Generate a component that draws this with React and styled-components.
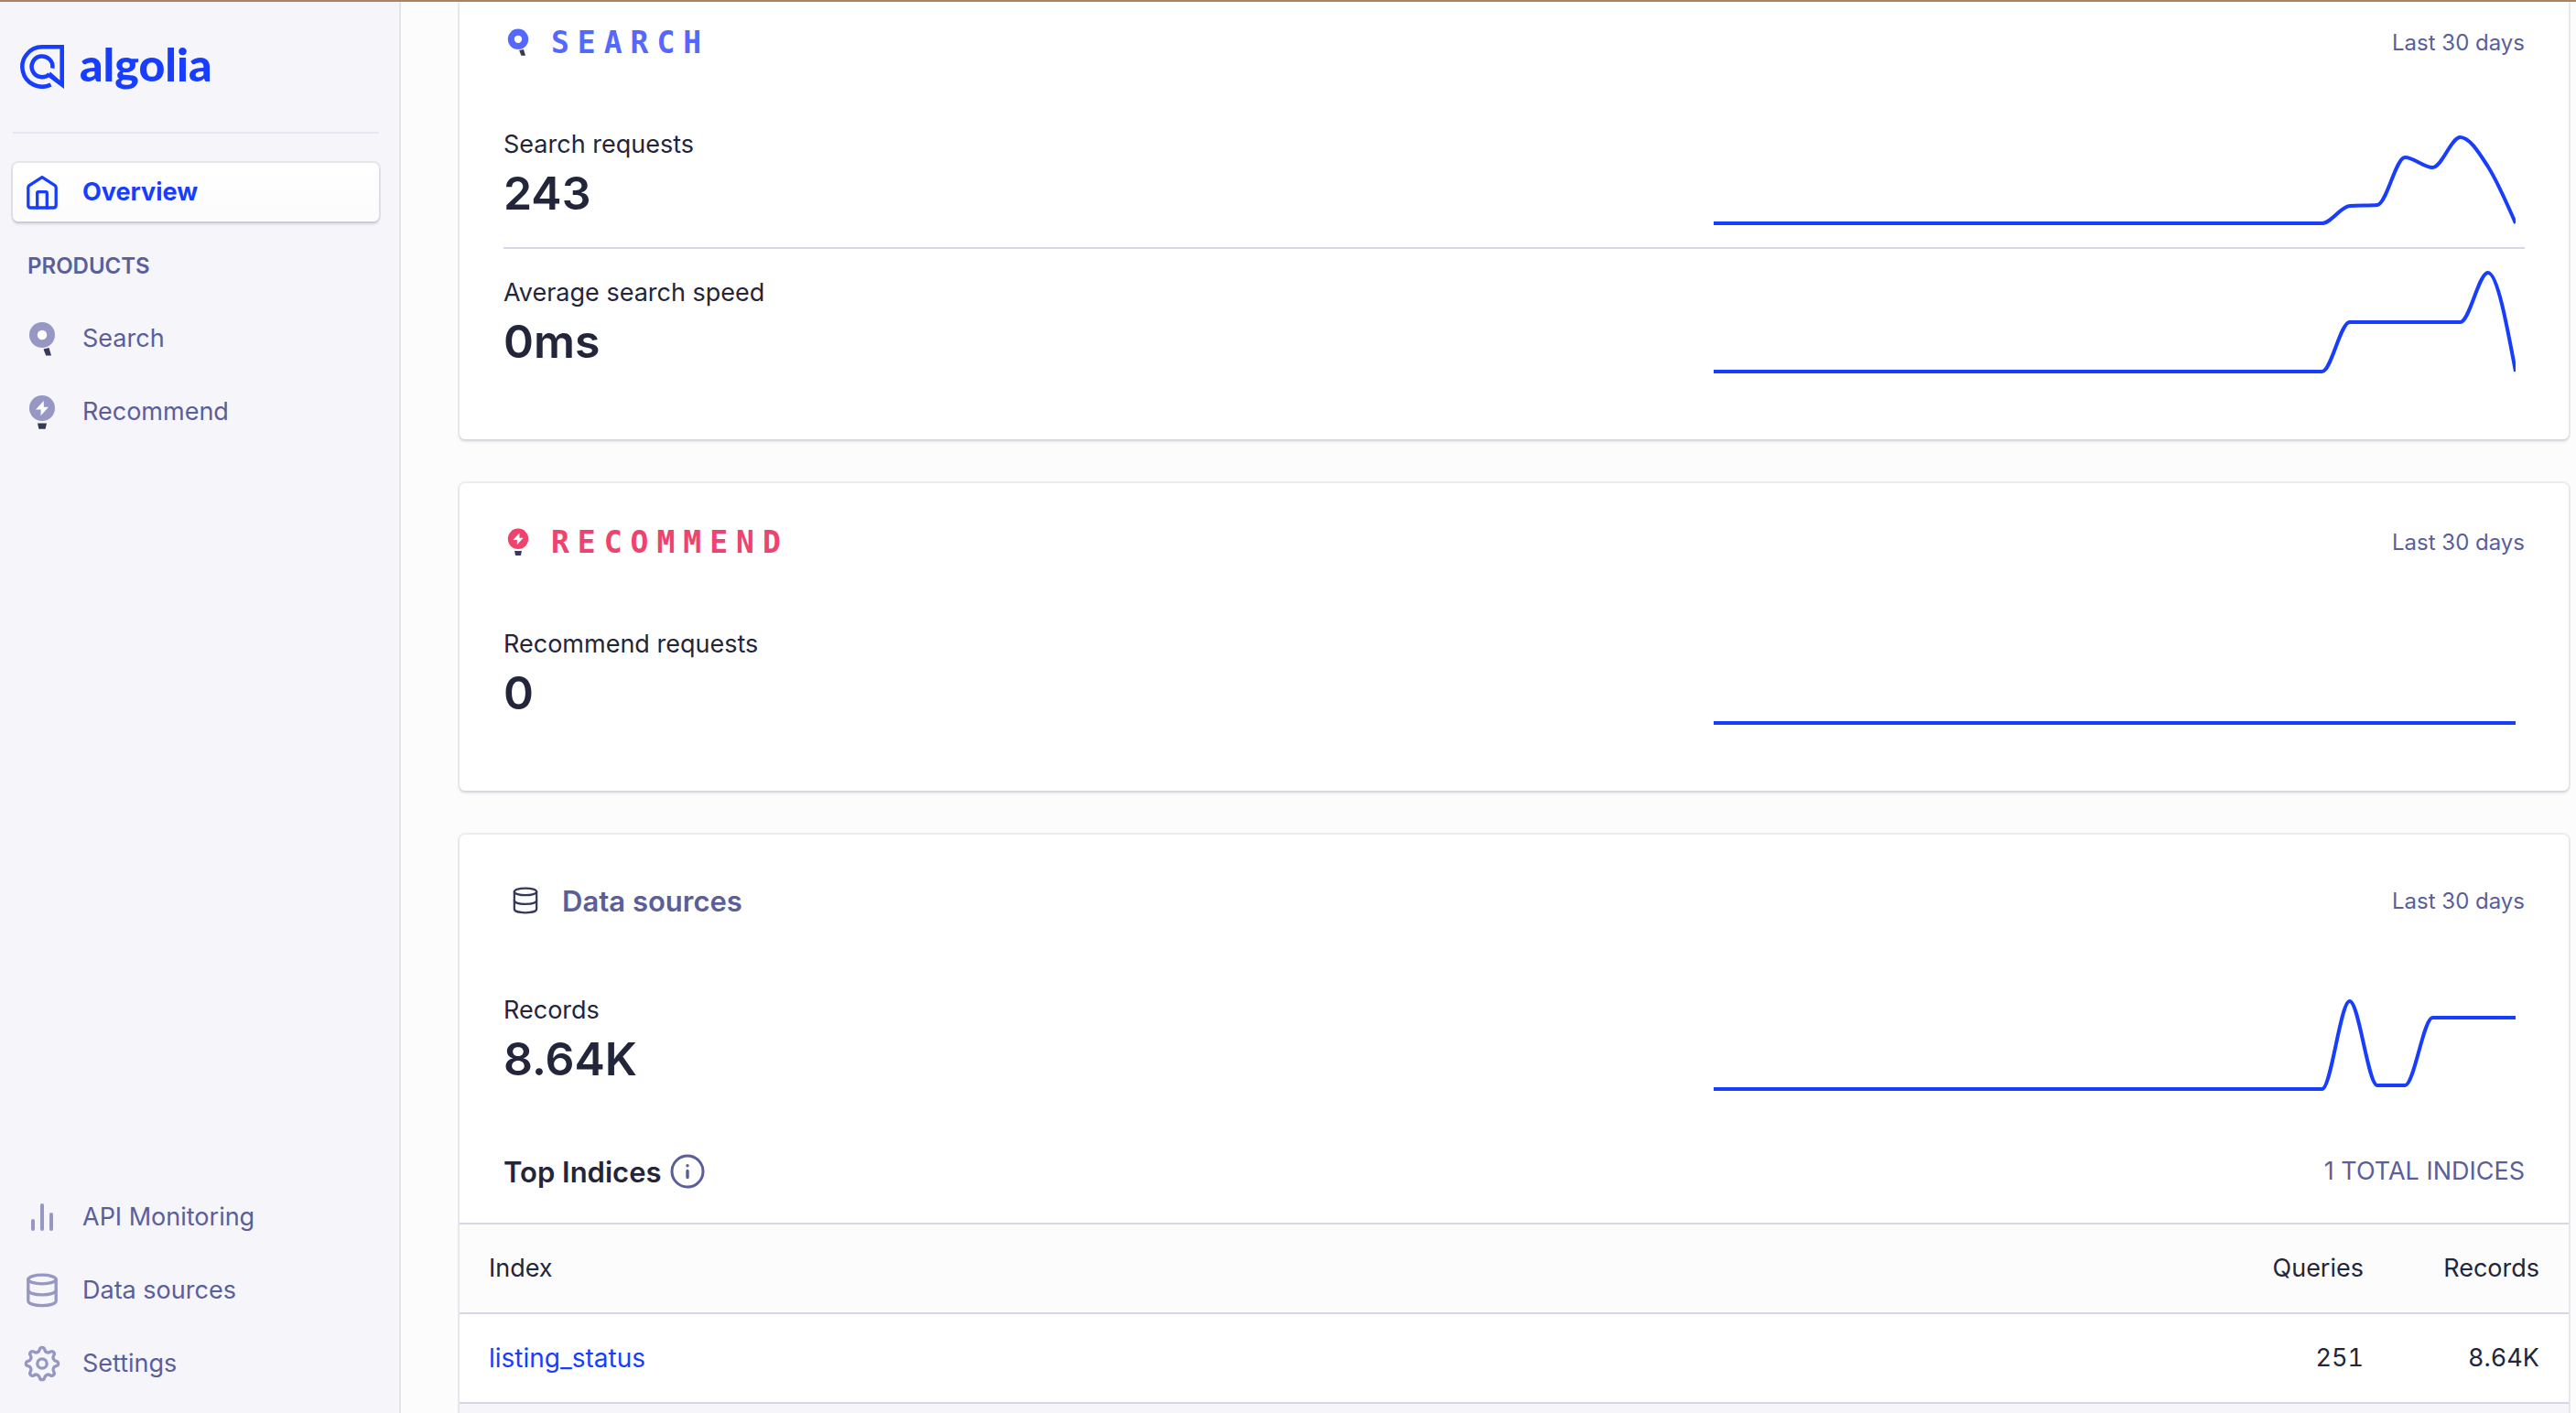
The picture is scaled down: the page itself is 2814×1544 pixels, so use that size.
import React from "react";
import styled, { createGlobalStyle } from "styled-components";

const c = {
  blue: "#173dff",
  indigo: "#5a5e9a",
  muted: "#9698c3",
  ink: "#23263b",
  dark: "#36395a",
  line: "#d6d6e7",
  side: "#f5f5fa",
  page: "#fcfcfd",
};

const Global = createGlobalStyle`
  *, *::before, *::after { box-sizing: border-box; }
  html, body { margin: 0; height: 100%; }
  body { font-family: Inter, "Liberation Sans", sans-serif; font-size: 27px; line-height: 32px; color: ${c.ink}; background: ${c.page}; }
  h1, h2, h3, p, ul { margin: 0; padding: 0; }
`;

const Shell = styled.div`
  display: flex;
  height: 100vh;
  overflow: hidden;
  border-top: 2px solid #ad8264;
`;

const Sidebar = styled.aside`
  flex: none;
  width: 438px;
  display: flex;
  flex-direction: column;
  padding: 0 22px 22px 14px;
  background: ${c.side};
  border-right: 2px solid #e4e3f0;
`;

const Brand = styled.a`
  display: flex;
  align-items: center;
  gap: 17px;
  height: 144px;
  padding: 0 8px;
  border-bottom: 2px solid #e7e6f2;
  color: ${c.blue};
  text-decoration: none;
`;

const Wordmark = styled.span`
  padding-bottom: 6px;
  font: 900 50px/48px Lato, sans-serif;
`;

const Menu = styled.ul`
  display: flex;
  flex-direction: column;
  gap: 16px;
  list-style: none;
  padding-top: ${(p) => (p.$bottom ? 0 : 32)}px;
  margin-top: ${(p) => (p.$bottom ? "auto" : 0)};
`;

const MenuLabel = styled.li`
  height: 64px;
  padding-left: 16px;
  color: ${c.indigo};
  font-size: 24px;
  font-weight: 600;
  line-height: 66px;
`;

const MenuLink = styled.a`
  display: flex;
  align-items: center;
  gap: 24px;
  height: 64px;
  padding: 0 12px;
  border-radius: 6px;
  text-decoration: none;
  color: ${(p) => (p.$active ? c.blue : c.indigo)};
  font-weight: ${(p) => (p.$active ? 700 : 400)};
  background: ${(p) => (p.$active ? "linear-gradient(#fff, #fcfcfd)" : "none")};
  box-shadow: ${(p) => (p.$active ? "0 0 0 2px rgba(35,38,59,.07), 0 3px 3px rgba(35,38,59,.14)" : "none")};
  svg { color: ${(p) => (p.$active ? c.blue : c.muted)}; }
`;

const Main = styled.main`
  flex: 1;
  min-width: 0;
  display: flex;
  flex-direction: column;
  gap: 48px;
  padding: 0 8px 0 64px;
  overflow: hidden;
`;

const Card = styled.section`
  flex: none;
  background: #fff;
  border-radius: ${(p) => (p.$cut ? "0 0 6px 6px" : "6px")};
  box-shadow: 0 0 0 2px rgba(35, 38, 59, 0.07), 0 3px 3px rgba(35, 38, 59, 0.1);
`;

const CardBody = styled.div`
  padding: ${(p) => p.$top}px 48px ${(p) => p.$bottom}px;
`;

const CardHead = styled.header`
  display: flex;
  align-items: center;
  justify-content: space-between;
  height: 32px;
  margin-bottom: ${(p) => p.$space}px;
`;

const HeadText = styled.span`
  padding-top: 2px;
`;

const ProductName = styled.h2`
  display: flex;
  align-items: center;
  gap: 20px;
  color: ${(p) => p.$color};
  font: 700 33px/32px "DejaVu Sans Mono", monospace;
  letter-spacing: 9px;
`;

const SectionName = styled.h2`
  display: flex;
  align-items: center;
  gap: 24px;
  padding-left: 8px;
  color: ${c.indigo};
  font-size: 31px;
  font-weight: 600;
  line-height: 32px;
  svg { color: ${c.dark}; }
`;

const Period = styled(HeadText)`
  color: ${c.indigo};
  font-size: 24px;
`;

const Metric = styled.div`
  display: flex;
  justify-content: space-between;
  height: 160px;
  & + & { height: 162px; border-top: 2px solid ${c.line}; }
`;

const MetricText = styled.div`
  padding-top: 32px;
`;

const MetricValue = styled.p`
  font-size: 50px;
  font-weight: 600;
  line-height: 74px;
`;

const Plot = styled.svg`
  display: block;
  width: 886px;
  max-width: 50%;
  height: 160px;
  padding-right: 10px;
`;

const IndicesHead = styled.div`
  display: flex;
  align-items: center;
  justify-content: space-between;
  height: 120px;
  padding: 48px 48px 40px;
  color: ${c.indigo};
`;

const IndicesTitle = styled.h3`
  display: flex;
  align-items: center;
  gap: 8px;
  color: ${c.ink};
  font-size: 31px;
  font-weight: 600;
  svg { color: ${c.indigo}; }
`;

const Table = styled.table`
  width: 100%;
  border-collapse: separate;
  border-spacing: 0;
`;

const Cell = styled.td`
  width: ${(p) => (p.$num ? "192px" : "auto")};
  height: 98px;
  padding: 0 32px;
  text-align: ${(p) => (p.$num ? "right" : "left")};
  font-weight: 400;
  font-variant-numeric: tabular-nums;
  border-bottom: 2px solid ${c.line};
`;

const HeadCell = styled(Cell)`
  height: 100px;
  background: ${c.page};
  border-top: 2px solid ${c.line};
`;

const IndexLink = styled.a`
  color: ${c.blue};
  font-size: 28px;
  text-decoration: none;
`;

const TableFoot = styled.div`
  height: 64px;
  background: ${c.side};
`;

const Icon = ({ size = 40, children, width = 3.3 }) => (
  <svg width={size} height={size} viewBox="0 0 40 40" fill="none" stroke="currentColor"
    strokeWidth={width} strokeLinecap="round" strokeLinejoin="round" aria-hidden="true">
    {children}
  </svg>
);

const HomeIcon = () => (
  <Icon>
    <path d="M20 3.6 34 12.6Q35.2 13.4 35.2 15V34.2Q35.2 37 32.4 37H7.6Q4.8 37 4.8 34.2V15Q4.8 13.4 6 12.6Z" />
    <path d="M14.7 37V20.8Q14.7 19.6 15.9 19.6H24.1Q25.3 19.6 25.3 20.8V37" />
  </Icon>
);

const SearchIcon = ({ size, color }) => (
  <Icon size={size}>
    <circle cx="20" cy="16" r="14" fill={color} stroke="none" />
    <circle cx="20" cy="16" r="5.2" fill="#fff" stroke="none" />
    <path d="M21.5 31.4 27.5 30 30 38.4H24.2Z" fill={c.dark} stroke="none" />
  </Icon>
);

const RecommendIcon = ({ size, color }) => (
  <Icon size={size}>
    <circle cx="20" cy="16" r="14" fill={color} stroke="none" />
    <path d="M21.8 8 13 17.6H18.6V24.2L27 14.8H21.8Z" fill="#fff" stroke="none" />
    <path d="M15 32.5H25L23.6 38.8H16.4Z" fill={c.dark} stroke="none" />
  </Icon>
);

const BarsIcon = () => (
  <Icon width={4}>
    <path d="M10 24V33M20 7V33M30 17V33" />
  </Icon>
);

const DataIcon = ({ size, width }) => (
  <Icon size={size} width={width}>
    <ellipse cx="20" cy="8" rx="15.2" ry="4.8" />
    <path d="M4.8 8V31.5C4.8 34.4 11 36.6 20 36.6S35.2 34.4 35.2 31.5V8" />
    <path d="M4.8 20C4.8 22.6 11 24.8 20 24.8S35.2 22.6 35.2 20" />
  </Icon>
);

const gear = (() => {
  let d = "";
  for (let i = 0; i < 8; i++) {
    const at = (r, deg) => {
      const a = ((i * 45 + deg - 90) * Math.PI) / 180;
      return (20 + r * Math.cos(a)).toFixed(2) + " " + (20 + r * Math.sin(a)).toFixed(2);
    };
    d += (i ? "L" : "M") + at(15.6, -10) + "A2.75 2.75 0 0 1 " + at(15.6, 10) + "A4 4 0 0 0 " + at(15.6, 35);
  }
  return d + "Z";
})();

const GearIcon = () => (
  <Icon>
    <path d={gear} />
    <circle cx="20" cy="20" r="5.2" />
  </Icon>
);

const InfoIcon = () => (
  <Icon width={3}>
    <circle cx="20" cy="20" r="17" />
    <path d="M20 19.5V26.5M20 13.6V13.8" strokeWidth="3.4" />
  </Icon>
);

const Mark = () => (
  <svg width="48" height="48" viewBox="0 0 48 48" fill="none" stroke={c.blue} strokeWidth="4.5" aria-hidden="true">
    <path d="M33.6 43.5A21.7 21.7 0 1 1 24 2.3H45" />
    <path d="M32 32A11.4 11.4 0 1 1 35.3 25.6" />
    <path d="M43.4 0H48V48L29.6 34.2 33 29.4 43.4 38.8Z" fill={c.blue} stroke="none" />
  </svg>
);

// Smooth curve through the points that never overshoots between two of them.
function monotonePath(pts) {
  const n = pts.length;
  const slope = pts.slice(1).map((p, i) => (p[1] - pts[i][1]) / (p[0] - pts[i][0]));
  const t = pts.map((_, i) => {
    if (i === 0 || i === n - 1) return null;
    const a = slope[i - 1];
    const b = slope[i];
    if (a * b <= 0) return 0;
    return Math.sign(a) * Math.min(2 * Math.abs(a), 2 * Math.abs(b), Math.abs(a + b) / 2);
  });
  t[0] = (3 * slope[0] - t[1]) / 2;
  t[n - 1] = (3 * slope[n - 2] - t[n - 2]) / 2;
  let d = `M${pts[0][0]} ${pts[0][1]}`;
  for (let i = 1; i < n; i++) {
    const [x0, y0] = pts[i - 1];
    const [x1, y1] = pts[i];
    const k = (x1 - x0) / 3;
    d += `C${x0 + k} ${y0 + k * t[i - 1]} ${x1 - k} ${y1 - k * t[i]} ${x1} ${y1}`;
  }
  return d;
}

const Sparkline = ({ label, tail = [] }) => {
  const values = Array(30 - tail.length).fill(0).concat(tail);
  const pts = values.map((v, i) => [(i * 876) / 29, 134 - v]);
  return (
    <Plot viewBox="0 0 876 160" preserveAspectRatio="none" role="img" aria-label={label}>
      <path d={monotonePath(pts)} fill="none" stroke={c.blue} strokeWidth="4" />
    </Plot>
  );
};

const Stat = ({ label, value, tail }) => (
  <Metric>
    <MetricText>
      <p>{label}</p>
      <MetricValue>{value}</MetricValue>
    </MetricText>
    <Sparkline label={label} tail={tail} />
  </Metric>
);

const Item = ({ icon, active, children }) => (
  <li>
    <MenuLink href="#" $active={active} aria-current={active ? "page" : undefined}>
      {icon}
      {children}
    </MenuLink>
  </li>
);

export default function App() {
  return (
    <>
      <Global />
      <Shell>
        <Sidebar>
          <Brand href="#">
            <Mark />
            <Wordmark>algolia</Wordmark>
          </Brand>
          <Menu>
            <Item icon={<HomeIcon />} active>Overview</Item>
            <MenuLabel>PRODUCTS</MenuLabel>
            <Item icon={<SearchIcon color={c.muted} />}>Search</Item>
            <Item icon={<RecommendIcon color={c.muted} />}>Recommend</Item>
          </Menu>
          <Menu $bottom>
            <Item icon={<BarsIcon />}>API Monitoring</Item>
            <Item icon={<DataIcon />}>Data sources</Item>
            <Item icon={<GearIcon />}>Settings</Item>
          </Menu>
        </Sidebar>
        <Main>
          <Card $cut>
            <CardBody $top={28} $bottom={48}>
              <CardHead $space={48}>
                <ProductName $color="#5468ff">
                  <SearchIcon size={32} color="#5468ff" />
                  <HeadText>SEARCH</HeadText>
                </ProductName>
                <Period>Last 30 days</Period>
              </CardHead>
              <Stat label="Search requests" value="243" tail={[19, 20, 72, 61, 94, 62, 0]} />
              <Stat label="Average search speed" value="0ms" tail={[54, 54, 54, 54, 54, 108, 0]} />
            </CardBody>
          </Card>
          <Card>
            <CardBody $top={48} $bottom={48}>
              <CardHead $space={48}>
                <ProductName $color="#ed436d">
                  <RecommendIcon size={32} color="#ed436d" />
                  <HeadText>RECOMMEND</HeadText>
                </ProductName>
                <Period>Last 30 days</Period>
              </CardHead>
              <Stat label="Recommend requests" value="0" />
            </CardBody>
          </Card>
          <Card>
            <CardBody $top={56} $bottom={0}>
              <CardHead $space={56}>
                <SectionName>
                  <DataIcon size={32} width={2.8} />
                  <HeadText>Data sources</HeadText>
                </SectionName>
                <Period>Last 30 days</Period>
              </CardHead>
              <Stat label="Records" value="8.64K" tail={[96, 4, 4, 78, 78, 78, 78]} />
            </CardBody>
            <IndicesHead>
              <IndicesTitle>
                <HeadText>Top Indices</HeadText>
                <InfoIcon />
              </IndicesTitle>
              <span>1 TOTAL INDICES</span>
            </IndicesHead>
            <Table>
              <thead>
                <tr>
                  <HeadCell as="th" scope="col">Index</HeadCell>
                  <HeadCell as="th" scope="col" $num>Queries</HeadCell>
                  <HeadCell as="th" scope="col" $num>Records</HeadCell>
                </tr>
              </thead>
              <tbody>
                <tr>
                  <Cell><IndexLink href="#">listing_status</IndexLink></Cell>
                  <Cell $num>251</Cell>
                  <Cell $num>8.64K</Cell>
                </tr>
              </tbody>
            </Table>
            <TableFoot />
          </Card>
        </Main>
      </Shell>
    </>
  );
}
